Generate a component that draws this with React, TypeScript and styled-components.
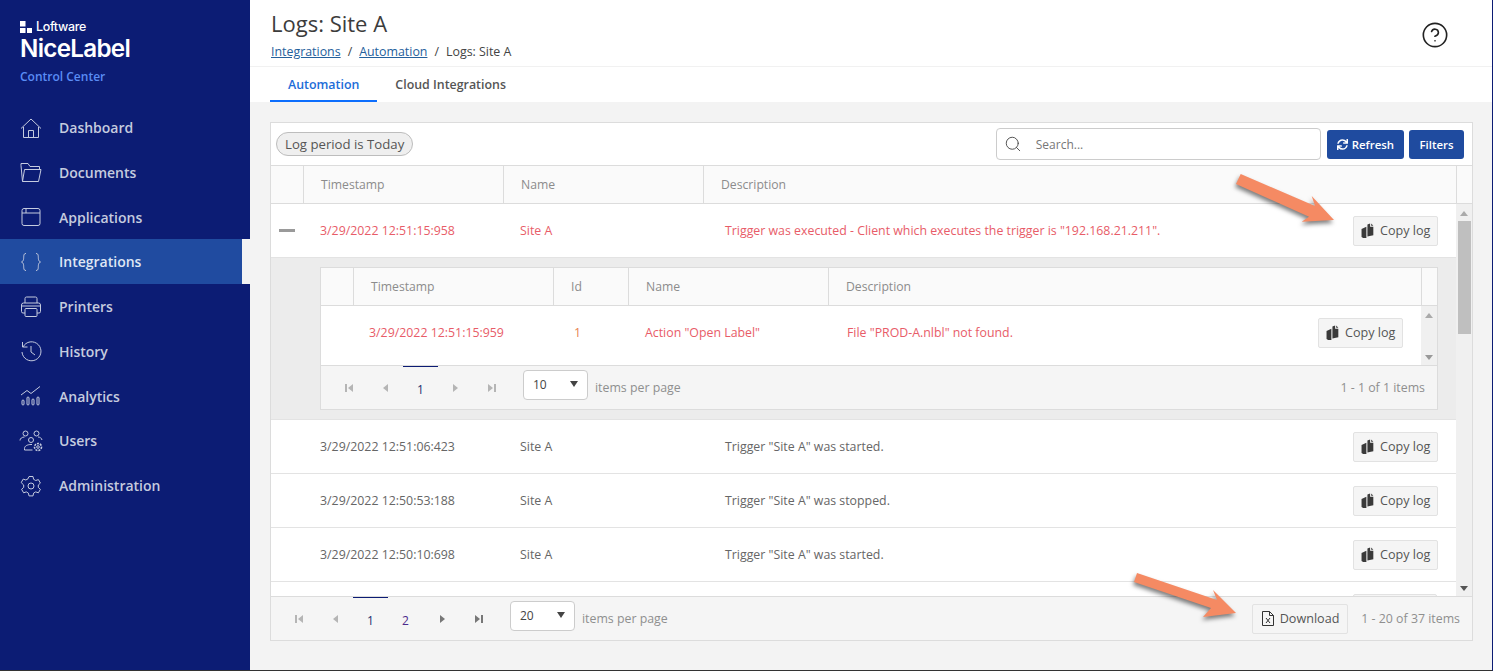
import styled, { createGlobalStyle } from "styled-components";
import { FaSync } from "react-icons/fa";
import { Search, CircleHelp } from "lucide-react";
import type { ReactNode } from "react";

const Global = createGlobalStyle`
  html, body {
    margin: 0;
    padding: 0;
    background: #fff;
  }
  * {
    box-sizing: border-box;
  }
  body {
    font-family: "Open Sans", "Noto Sans", "Liberation Sans", sans-serif;
    font-size: 12px;
    color: #555;
  }
`;

const Page = styled.div`
  width: 1495px;
  height: 672px;
  background: #fff;
`;

const Frame = styled.div`
  position: relative;
  width: 1493px;
  height: 671px;
  display: flex;
  border-right: 1px solid #0c1c74;
  border-bottom: 1px solid #333;
  overflow: hidden;
  background: #f3f3f3;
`;

const Sidebar = styled.aside`
  width: 250px;
  flex: none;
  background: #0c1c74;
  display: flex;
  flex-direction: column;
`;

const Logo = styled.div`
  height: 105.2px;
  padding: 19px 0 0 20px;
  color: #fff;
`;

const Brand = styled.div`
  display: flex;
  align-items: center;
  gap: 4px;
  height: 15px;
  font-family: "Inter", sans-serif;
  font-size: 12.4px;
  font-weight: 500;
  letter-spacing: -0.3px;
`;

const BrandMark = styled.svg`
  width: 12px;
  height: 12px;
  fill: #fff;
`;

const Product = styled.div`
  font-family: "Inter", sans-serif;
  font-size: 24.2px;
  font-weight: 600;
  line-height: 30px;
  letter-spacing: -0.7px;
`;

const Sub = styled.div`
  color: #5a8cf5;
  font-size: 12px;
  font-weight: 600;
  line-height: 16px;
  margin-top: 5px;
`;

const NavItem = styled.div<{ $active?: boolean }>`
  height: 44.75px;
  display: flex;
  align-items: center;
  background: ${(p) => (p.$active ? "#204ba0" : "transparent")};
  color: ${(p) => (p.$active ? "#dfe6f4" : "#c5cbdf")};
  font-size: 14px;
  font-weight: 600;
  box-shadow: ${(p) => (p.$active ? "8px 0 0 #f3f3f3" : "none")};
  margin-right: ${(p) => (p.$active ? "8px" : "0")};
`;

const NavIcon = styled.svg`
  width: 24px;
  height: 24px;
  margin: 0 16px 0 19px;
  fill: none;
  stroke: #c5cbdf;
  stroke-width: 1;
  flex: none;
`;

const Main = styled.main`
  flex: 1;
  min-width: 0;
  display: flex;
  flex-direction: column;
`;

const Header = styled.header`
  height: 67px;
  background: #fff;
  border-bottom: 1px solid #f1f1f1;
  padding: 7px 0 0 21px;
  display: flex;
  justify-content: space-between;
`;

const Title = styled.h1`
  margin: 0;
  font-size: 22px;
  font-weight: 400;
  line-height: 32px;
  color: #3c3c3c;
`;

const Crumbs = styled.div`
  font-size: 12.4px;
  line-height: 18px;
  margin-top: 4px;
  color: #444;
  display: flex;
  gap: 7px;
`;

const Crumb = styled.span`
  color: #24609c;
  text-decoration: underline;
`;

const Help = styled.div`
  margin: 14px 43px 0 0;
  color: #222;
`;

const Tabs = styled.nav`
  height: 35px;
  background: #fff;
  padding-left: 20px;
  display: flex;
`;

const Tab = styled.div<{ $active?: boolean }>`
  height: 35px;
  padding: 2px 18px 0;
  display: flex;
  align-items: center;
  font-size: 12.4px;
  font-weight: 600;
  color: ${(p) => (p.$active ? "#1c6dd8" : "#555")};
  border-bottom: 2px solid ${(p) => (p.$active ? "#0d6efd" : "transparent")};
`;

const Content = styled.div`
  flex: 1;
  padding: 20px 20px 30px 20px;
  min-height: 0;
`;

const Card = styled.section`
  height: 519px;
  width: 1203px;
  background: #fff;
  border: 1px solid #dcdcdc;
  display: flex;
  flex-direction: column;
`;

const Toolbar = styled.div`
  height: 43px;
  flex: none;
  display: flex;
  align-items: center;
  padding: 0 8px 0 5px;
  border-bottom: 1px solid #dcdcdc;
`;

const Chip = styled.div`
  height: 24px;
  padding: 0 8px;
  border: 1px solid #bdbdbd;
  border-radius: 12px;
  background: #efefef;
  display: flex;
  align-items: center;
  font-size: 13.2px;
  color: #555;
`;

const SearchBox = styled.div`
  width: 325px;
  height: 32px;
  margin-left: auto;
  border: 1px solid #ccc;
  border-radius: 4px;
  display: flex;
  align-items: center;
  gap: 14px;
  padding-left: 7px;
  color: #777;
  font-size: 12px;
`;

const Primary = styled.button`
  height: 29px;
  margin-left: 6px;
  padding: 0 10px;
  border: 0;
  border-radius: 3px;
  background: #1f4b9f;
  color: #fff;
  font: 600 11.4px "Open Sans", sans-serif;
  display: flex;
  align-items: center;
  gap: 4px;
`;

const PrimaryNarrow = styled(Primary)`
  margin-left: 5px;
  width: 55px;
  justify-content: center;
  padding: 0;
`;

const HeadRow = styled.div`
  height: 38px;
  flex: none;
  display: flex;
  background: #fafafa;
  border-bottom: 1px solid #dcdcdc;
`;

const HeadCell = styled.div<{ $w: number; $grow?: boolean }>`
  width: ${(p) => p.$w}px;
  flex: ${(p) => (p.$grow ? 1 : "none")};
  border-right: 1px solid #dcdcdc;
  display: flex;
  align-items: center;
  padding-left: 17px;
  font-size: 12.2px;
  color: #8c8c8c;

  &:last-child {
    border-right: 0;
  }
`;

const Body = styled.div`
  flex: 1;
  min-height: 0;
  display: flex;
`;

const Rows = styled.div`
  flex: 1;
  min-width: 0;
  overflow: hidden;
`;

const Scroller = styled.div`
  width: 16px;
  flex: none;
  background: #f0f0f0;
  display: flex;
  flex-direction: column;
  align-items: center;
  position: relative;
`;

const Thumb = styled.div<{ $top: number; $h: number }>`
  width: 13px;
  height: ${(p) => p.$h}px;
  margin-top: ${(p) => p.$top}px;
  background: #bfbfbf;
`;

const Tri = styled.div<{ $up?: boolean; $color?: string }>`
  position: absolute;
  ${(p) => (p.$up ? "top: 7px;" : "bottom: 5px;")}
  left: 50%;
  margin-left: -4px;
  width: 0;
  height: 0;
  border-left: 4px solid transparent;
  border-right: 4px solid transparent;
  ${(p) => (p.$up ? "border-bottom" : "border-top")}: 5px solid ${(p) => p.$color || "#555"};
`;

const Row = styled.div<{ $red?: boolean }>`
  height: 54px;
  display: flex;
  align-items: center;
  border-bottom: 1px solid #e3e3e3;
  font-size: 12.35px;
  color: ${(p) => (p.$red ? "#e85c68" : "#666")};
`;

const NestedRow = styled(Row)`
  flex: 1;
  height: 59px;
  padding-bottom: 6px;
  border-bottom: 0;
`;

const Cell = styled.div<{ $w: number; $grow?: boolean; $color?: string; $pl?: number }>`
  width: ${(p) => p.$w}px;
  flex: ${(p) => (p.$grow ? 1 : "none")};
  padding-left: ${(p) => p.$pl ?? 16}px;
  white-space: nowrap;
  ${(p) => p.$color && `color: ${p.$color};`}
`;

const Toggle = styled.div`
  width: 16px;
  height: 3px;
  margin-left: 8px;
  background: #9a9a9a;
`;

const GhostButton = styled.button`
  height: 30px;
  padding: 0 7px;
  display: flex;
  align-items: center;
  gap: 4px;
  border: 1px solid #e2e2e2;
  border-radius: 2px;
  background: #f5f5f5;
  color: #555;
  font: 400 12.6px "Open Sans", sans-serif;
  flex: none;
`;

const BlankButton = styled(GhostButton)`
  width: 84px;
`;

const DownloadButton = styled(GhostButton)`
  margin-right: 13px;
  padding: 0 8px;
  gap: 5px;
`;

const RowAction = styled.div`
  flex: none;
  width: 103px;
`;

const Detail = styled.div`
  height: 162px;
  background: #ececec;
  border-bottom: 1px solid #e3e3e3;
  padding: 9px 18px 10px 49px;
`;

const Nested = styled.div`
  height: 143px;
  background: #f5f5f5;
  border: 1px solid #dcdcdc;
  display: flex;
  flex-direction: column;
`;

const NestedBody = styled.div`
  height: 60px;
  flex: none;
  display: flex;
  background: #fff;
  border-bottom: 1px solid #dcdcdc;
`;

const Pager = styled.div`
  flex: 1;
  min-height: 0;
  background: #f5f5f5;
  display: flex;
  align-items: center;
  padding: 0 12px 0 10px;
  font-size: 12.35px;
  color: #8f8f8f;
`;

const PagerMain = styled(Pager)`
  flex: none;
  height: 44px;
  border-top: 1px solid #dcdcdc;
  padding-left: 10px;
`;

const PageIcon = styled.svg<{ $on?: boolean }>`
  width: 12px;
  height: 12px;
  fill: ${(p) => (p.$on ? "#777" : "#b5b5b5")};
  flex: none;
  margin: 0 12px;
`;

const PageNum = styled.div<{ $active?: boolean; $color?: string }>`
  width: 35px;
  height: 43px;
  display: flex;
  align-items: center;
  justify-content: center;
  padding-top: 2px;
  border-top: 1px solid ${(p) => (p.$active ? "#0c1c74" : "transparent")};
  color: ${(p) => p.$color || "#1d2f6f"};
  font-size: 12px;
`;

const PageNumNext = styled(PageNum)`
  margin-right: 2px;
`;

const Select = styled.div`
  width: 65px;
  height: 30px;
  margin: -5px 7px 0 13px;
  padding: 0 9px 2px;
  display: flex;
  align-items: center;
  justify-content: space-between;
  background: #fff;
  border: 1px solid #ccc;
  border-radius: 4px;
  color: #444;
  font-size: 12px;
  flex: none;
`;

const Caret = styled.div`
  width: 0;
  height: 0;
  border-left: 4.5px solid transparent;
  border-right: 4.5px solid transparent;
  border-top: 6px solid #444;
`;

const Spacer = styled.div`
  flex: 1;
`;

const ArrowLayer = styled.svg`
  position: absolute;
  left: 0;
  top: 0;
  width: 1495px;
  height: 672px;
  pointer-events: none;
  filter: drop-shadow(-1px 3px 2px rgba(0, 0, 0, 0.5));
`;

function Nav({ d, label, active }: { d: ReactNode; label: string; active?: boolean }) {
  return (
    <NavItem $active={active}>
      <NavIcon viewBox="0 0 24 24">{d}</NavIcon>
      {label}
    </NavItem>
  );
}

const navItems: { label: string; icon: ReactNode; active?: boolean }[] = [
  { label: "Dashboard", icon: <path d="M2 12.5 12 3l10 9.5M4.5 11v10.5h15V11M9.5 21.5v-7h5v7" /> },
  { label: "Documents", icon: <path d="M3.5 21.5 2 5.5V3.5h7l2 3h9.5v3M3.5 21.5h16l2.5-12H5.500z" /> },
  { label: "Applications", icon: <><rect x="3" y="3.500" width="18" height="17" rx="2" /><path d="M3 8h18M7 4v4" /></> },
  { label: "Integrations", active: true, icon: <path d="M7 3.500C4 3.500 5 7 4.500 9.500 4.200 11 3 12 2.500 12c.5 0 1.700 1 2 2.500C5 17 4 20.500 7 20.500M17 3.500c3 0 2 3.500 2.500 6 .3 1.500 1.500 2.500 2 2.500-.5 0-1.700 1-2 2.500-.5 2.500.5 6-2.500 6" /> },
  { label: "Printers", icon: <><path d="M6 8V3.500a1.500 1.500 0 0 1 1.500-1.500h9A1.500 1.500 0 0 1 18 3.500V8M6 18H4a1.500 1.500 0 0 1-1.500-1.500V10A2 2 0 0 1 4.500 8h15a2 2 0 0 1 2 2v6.500A1.500 1.500 0 0 1 20 18h-2" /><rect x="6" y="13.500" width="12" height="8" rx="1" /><path d="M3 11h18" /></> },
  { label: "History", icon: <><path d="M3.500 3v5h5M4 8a9.500 9.500 0 1 1-1 5" /><path d="M12 7v6l4 3" /></> },
  { label: "Analytics", icon: <><path d="M2 11l6-4.500 4 3 9-7" /><rect x="3" y="16" width="2" height="5" rx="1" /><rect x="8" y="13" width="2" height="8" rx="1" /><rect x="13" y="15" width="2" height="6" rx="1" /><rect x="18" y="13" width="2" height="8" rx="1" /></> },
  { label: "Users", icon: <><circle cx="6.500" cy="4.500" r="2.500" /><circle cx="17.500" cy="4.500" r="2.500" /><circle cx="12" cy="11" r="2.500" /><path d="M1 11.500c0-2 2-3.500 4.500-3.500M19 8c2 0 3.500 1 4 3M5.500 21v-1.500c0-2.500 3-4 6.500-4h1M5.500 21h8" /><circle cx="19" cy="18" r="3.500" strokeDasharray="2 1" strokeWidth="1.600" /><circle cx="19" cy="18" r="1.300" /></> },
  { label: "Administration", icon: <><circle cx="12" cy="12" r="3" /><path d="M10 2.500h4l.6 2.800 2.100 1.200 2.700-.9 2 3.500-2.100 1.900v2.400l2.100 1.900-2 3.500-2.700-.9-2.100 1.200-.6 2.800h-4l-.6-2.800-2.100-1.200-2.700.9-2-3.500 2.100-1.900v-2.400L2.200 8.600l2-3.500 2.700.9 2.100-1.200z" /></> },
];

function CopyIcon() {
  return (
    <svg width="15" height="15" viewBox="0 0 14 14" fill="#3a3a3a">
      <path d="M0.500 5.500 5 3.500V14H2L0.500 13z" />
      <path d="M6 1.500 8.500 0.500V3.500H11.500V11.500L6 12.500z" />
      <path d="M9.500 0.500 11.500 2.500H9.500z" />
    </svg>
  );
}

function CopyButton() {
  return (
    <GhostButton>
      <CopyIcon />
      Copy log
    </GhostButton>
  );
}

function PageArrow({ kind, on }: { kind: "first" | "prev" | "next" | "last"; on?: boolean }) {
  const d = {
    first: "M2 2h2v8H2zM10 2v8L5 6z",
    prev: "M9 2v8L4 6z",
    next: "M3 2v8l5-4z",
    last: "M10 2H8v8h2zM2 2v8l5-4z",
  }[kind];
  return (
    <PageIcon $on={on} viewBox="0 0 12 12">
      <path d={d} />
    </PageIcon>
  );
}

const plainRows = [
  { t: "3/29/2022 12:51:06:423", d: 'Trigger "Site A" was started.' },
  { t: "3/29/2022 12:50:53:188", d: 'Trigger "Site A" was stopped.' },
  { t: "3/29/2022 12:50:10:698", d: 'Trigger "Site A" was started.' },
];

export default function App() {
  return (
    <Page>
      <Global />
      <Frame>
        <Sidebar>
          <Logo>
            <Brand>
              <BrandMark viewBox="0 0 12 12">
                <rect x="0" y="0" width="5.500" height="5.500" />
                <rect x="0" y="7" width="5.500" height="5" />
                <rect x="7" y="7" width="5" height="5" />
              </BrandMark>
              Loftware
            </Brand>
            <Product>NiceLabel</Product>
            <Sub>Control Center</Sub>
          </Logo>
          {navItems.map((n) => (
            <Nav key={n.label} d={n.icon} label={n.label} active={n.active} />
          ))}
        </Sidebar>
        <Main>
          <Header>
            <div>
              <Title>Logs: Site A</Title>
              <Crumbs>
                <Crumb>Integrations</Crumb>/<Crumb>Automation</Crumb>/<span>Logs: Site A</span>
              </Crumbs>
            </div>
            <Help>
              <CircleHelp size={28} strokeWidth={1.4} />
            </Help>
          </Header>
          <Tabs>
            <Tab $active>Automation</Tab>
            <Tab>Cloud Integrations</Tab>
          </Tabs>
          <Content>
            <Card>
              <Toolbar>
                <Chip>Log period is Today</Chip>
                <SearchBox>
                  <Search size={18} strokeWidth={1.2} color="#444" />
                  Search...
                </SearchBox>
                <Primary>
                  <FaSync size={11} />
                  Refresh
                </Primary>
                <PrimaryNarrow>Filters</PrimaryNarrow>
              </Toolbar>
              <HeadRow>
                <HeadCell $w={33} />
                <HeadCell $w={200}>Timestamp</HeadCell>
                <HeadCell $w={200}>Name</HeadCell>
                <HeadCell $w={753}>Description</HeadCell>
                <HeadCell $w={16} />
              </HeadRow>
              <Body>
                <Rows>
                  <Row $red>
                    <Cell $w={33} $pl={0}>
                      <Toggle />
                    </Cell>
                    <Cell $w={200}>3/29/2022 12:51:15:958</Cell>
                    <Cell $w={205}>Site A</Cell>
                    <Cell $w={0} $grow>
                      Trigger was executed - Client which executes the trigger is "192.168.21.211".
                    </Cell>
                    <RowAction>
                      <CopyButton />
                    </RowAction>
                  </Row>
                  <Detail>
                    <Nested>
                      <HeadRow>
                        <HeadCell $w={33} />
                        <HeadCell $w={200}>Timestamp</HeadCell>
                        <HeadCell $w={75}>Id</HeadCell>
                        <HeadCell $w={200}>Name</HeadCell>
                        <HeadCell $w={593}>Description</HeadCell>
                        <HeadCell $w={0} $grow />
                      </HeadRow>
                      <NestedBody>
                        <NestedRow $red>
                          <Cell $w={32} />
                          <Cell $w={201}>3/29/2022 12:51:15:959</Cell>
                          <Cell $w={75} $pl={20} $color="#e8824f">1</Cell>
                          <Cell $w={202}>Action "Open Label"</Cell>
                          <Cell $w={0} $grow>File "PROD-A.nlbl" not found.</Cell>
                          <RowAction>
                            <CopyButton />
                          </RowAction>
                        </NestedRow>
                        <Scroller>
                          <Tri $up $color="#aaa" />
                          <Tri $color="#999" />
                        </Scroller>
                      </NestedBody>
                      <Pager>
                        <PageArrow kind="first" />
                        <PageArrow kind="prev" />
                        <PageNum $active>1</PageNum>
                        <PageArrow kind="next" />
                        <PageArrow kind="last" />
                        <Select>
                          10
                          <Caret />
                        </Select>
                        items per page
                        <Spacer />
                        1 - 1 of 1 items
                      </Pager>
                    </Nested>
                  </Detail>
                  {plainRows.map((r) => (
                    <Row key={r.t}>
                      <Cell $w={33} />
                      <Cell $w={200}>{r.t}</Cell>
                      <Cell $w={205}>Site A</Cell>
                      <Cell $w={0} $grow>{r.d}</Cell>
                      <RowAction>
                        <CopyButton />
                      </RowAction>
                    </Row>
                  ))}
                  <Row>
                    <Cell $w={0} $grow />
                    <RowAction>
                      <BlankButton />
                    </RowAction>
                  </Row>
                </Rows>
                <Scroller>
                  <Tri $up $color="#aaa" />
                  <Thumb $top={17} $h={113} />
                  <Tri />
                </Scroller>
              </Body>
              <PagerMain>
                <PageArrow kind="first" />
                <PageArrow kind="prev" />
                <PageNum $active>1</PageNum>
                <PageNumNext $color="#4b2a8c">2</PageNumNext>
                <PageArrow kind="next" on />
                <PageArrow kind="last" on />
                <Select>
                  20
                  <Caret />
                </Select>
                items per page
                <Spacer />
                <DownloadButton>
                  <svg width="14" height="15" viewBox="0 0 14 15" fill="none" stroke="#333">
                    <path d="M1.500 0.500h7l4 4v10h-11zM8.500 0.500v4h4M5 7l4 5M9 7l-4 5" />
                  </svg>
                  Download
                </DownloadButton>
                1 - 20 of 37 items
              </PagerMain>
            </Card>
          </Content>
        </Main>
        <ArrowLayer viewBox="0 0 1495 672">
          <path fill="#f58a63" d="M1240.700 174 L1315 206 L1311.700 196 L1334 220 L1301.700 221.700 L1309 216.700 L1236 184 Z" />
          <path fill="#f58a63" d="M1137 573 L1217 600 L1213 590 L1236 613 L1203 617 L1211 608 L1134 582 Z" />
        </ArrowLayer>
      </Frame>
    </Page>
  );
}
